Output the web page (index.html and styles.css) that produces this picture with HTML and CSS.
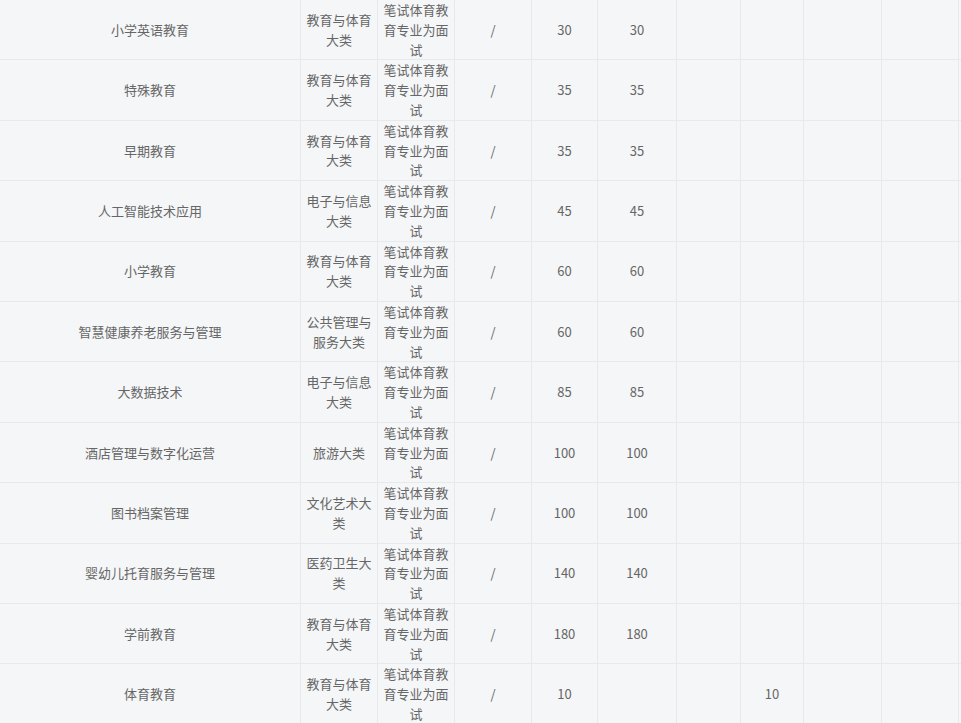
FILE: index.html
```html
<!DOCTYPE html>
<html lang="zh-CN">
<head>
<meta charset="utf-8">
<title>专业招生计划</title>
<link rel="stylesheet" href="styles.css">
</head>
<body>
<div class="wrap">
<table class="plan">
  <colgroup>
    <col class="c1"><col class="c2"><col class="c3"><col class="c4"><col class="c5"><col class="c6"><col class="c7"><col class="c8"><col class="c9"><col class="c10"><col class="c11">
  </colgroup>
  <tbody>
    <tr><td>小学英语教育</td><td>教育与体育大类</td><td>笔试体育教育专业为面试</td><td>/</td><td>30</td><td>30</td><td></td><td></td><td></td><td></td><td></td></tr>
    <tr><td>特殊教育</td><td>教育与体育大类</td><td>笔试体育教育专业为面试</td><td>/</td><td>35</td><td>35</td><td></td><td></td><td></td><td></td><td></td></tr>
    <tr><td>早期教育</td><td>教育与体育大类</td><td>笔试体育教育专业为面试</td><td>/</td><td>35</td><td>35</td><td></td><td></td><td></td><td></td><td></td></tr>
    <tr><td>人工智能技术应用</td><td>电子与信息大类</td><td>笔试体育教育专业为面试</td><td>/</td><td>45</td><td>45</td><td></td><td></td><td></td><td></td><td></td></tr>
    <tr><td>小学教育</td><td>教育与体育大类</td><td>笔试体育教育专业为面试</td><td>/</td><td>60</td><td>60</td><td></td><td></td><td></td><td></td><td></td></tr>
    <tr><td>智慧健康养老服务与管理</td><td>公共管理与服务大类</td><td>笔试体育教育专业为面试</td><td>/</td><td>60</td><td>60</td><td></td><td></td><td></td><td></td><td></td></tr>
    <tr><td>大数据技术</td><td>电子与信息大类</td><td>笔试体育教育专业为面试</td><td>/</td><td>85</td><td>85</td><td></td><td></td><td></td><td></td><td></td></tr>
    <tr><td>酒店管理与数字化运营</td><td>旅游大类</td><td>笔试体育教育专业为面试</td><td>/</td><td>100</td><td>100</td><td></td><td></td><td></td><td></td><td></td></tr>
    <tr><td>图书档案管理</td><td>文化艺术大类</td><td>笔试体育教育专业为面试</td><td>/</td><td>100</td><td>100</td><td></td><td></td><td></td><td></td><td></td></tr>
    <tr><td>婴幼儿托育服务与管理</td><td>医药卫生大类</td><td>笔试体育教育专业为面试</td><td>/</td><td>140</td><td>140</td><td></td><td></td><td></td><td></td><td></td></tr>
    <tr><td>学前教育</td><td>教育与体育大类</td><td>笔试体育教育专业为面试</td><td>/</td><td>180</td><td>180</td><td></td><td></td><td></td><td></td><td></td></tr>
    <tr><td>体育教育</td><td>教育与体育大类</td><td>笔试体育教育专业为面试</td><td>/</td><td>10</td><td></td><td></td><td>10</td><td></td><td></td><td></td></tr>
  </tbody>
</table>
</div>
</body>
</html>
```

FILE: styles.css
```css
html, body {
  margin: 0;
  padding: 0;
  background: #f5f6f8;
  overflow: hidden;
}
.wrap {
  width: 961px;
  height: 723px;
  overflow: hidden;
}
.plan {
  margin-top: 0;
  border-collapse: separate;
  border-spacing: 0;
  table-layout: fixed;
  width: 1039px;
  font-family: "Noto Sans CJK SC", "Microsoft YaHei", sans-serif;
  font-size: 13px;
  color: #666;
}
.c1 { width: 301px; }
.c2 { width: 77px; }
.c3 { width: 77px; }
.c4 { width: 77px; }
.c5 { width: 66px; }
.c6 { width: 79px; }
.c7 { width: 64px; }
.c8 { width: 63px; }
.c9 { width: 78px; }
.c10 { width: 77px; }
.c11 { width: 80px; }
.plan td {
  box-sizing: border-box;
  height: 60.4px;
  padding: 0 5px;
  line-height: 19.8px;
  text-align: center;
  vertical-align: middle;
  border-right: 1px solid #e8e9ec;
  border-bottom: 1px solid #e8e9ec;
  word-break: break-all;
}
```
